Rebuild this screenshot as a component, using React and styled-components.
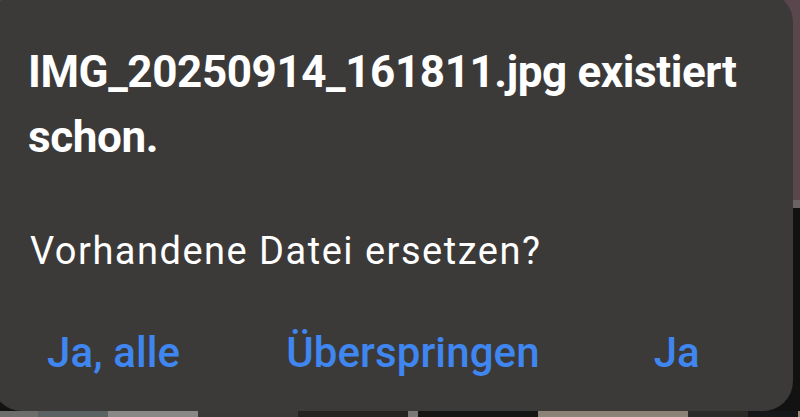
import React from "react";
import styled, { createGlobalStyle } from "styled-components";

const Global = createGlobalStyle`
  html, body { margin: 0; padding: 0; background: #111; }
  body { width: 800px; height: 417px; overflow: hidden; font-family: Roboto, "Liberation Sans", sans-serif; }
`;

const Screen = styled.div`
  width: 800px;
  height: 417px;
  overflow: hidden;
  display: flex;
  flex-direction: column;
  background: linear-gradient(
    to bottom,
    #5a464d 0px,
    #5a464d 200px,
    #6a6264 200px,
    #6a6264 208px,
    #121212 208px
  );
`;

const Dialog = styled.div`
  margin: -8px 7px 0 -8px;
  height: 419px;
  flex: none;
  box-sizing: border-box;
  background: #3c3a39;
  border-radius: 30px;
  padding: 48px 0 0 36px;
  display: flex;
  flex-direction: column;
  color: #fff;
`;

const Title = styled.h1`
  margin: 0;
  font-family: Roboto, "Liberation Sans", sans-serif;
  font-weight: 700;
  font-size: 44px;
  line-height: 65px;
  letter-spacing: -0.4px;
  width: 740px;
`;

const Message = styled.p`
  margin: 57px 0 0 2px;
  font-family: Roboto, "Liberation Sans", sans-serif;
  font-weight: 400;
  font-size: 38px;
  line-height: 48px;
  letter-spacing: 1.5px;
`;

const Actions = styled.div`
  margin-top: 54px;
  display: flex;
  align-items: center;
  padding-left: 19px;
`;

const Action = styled.button`
  background: none;
  border: none;
  padding: 0;
  margin-right: ${(p) => p.$gap}px;
  font-family: Roboto, "Liberation Sans", sans-serif;
  font-weight: 500;
  font-size: 42px;
  line-height: 48px;
  letter-spacing: 0.1px;
  color: #3f86f0;
  cursor: pointer;
`;

const Strip = styled.div`
  flex: none;
  height: 6px;
  display: flex;
`;

const Thumb = styled.div`
  flex: none;
  width: ${(p) => p.$w}px;
  background: ${(p) => p.$c};
`;

const thumbs = [
  [38, "#6d6d6b"],
  [70, "#5b6264"],
  [90, "#8a8886"],
  [100, "#3a3836"],
  [110, "#242322"],
  [10, "#7a7876"],
  [120, "#151515"],
  [150, "#8c8376"],
  [60, "#2b2a28"],
  [50, "#15171a"],
  [80, "#9d8c72"],
];

export default function App() {
  return (
    <>
      <Global />
      <Screen>
        <Dialog>
          <Title>IMG_20250914_161811.jpg existiert schon.</Title>
          <Message>Vorhandene Datei ersetzen?</Message>
          <Actions>
            <Action $gap={106}>Ja, alle</Action>
            <Action $gap={114}>Überspringen</Action>
            <Action $gap={0}>Ja</Action>
          </Actions>
        </Dialog>
        <Strip>
          {thumbs.map(([w, c], i) => (
            <Thumb key={i} $w={w} $c={c} />
          ))}
        </Strip>
      </Screen>
    </>
  );
}
